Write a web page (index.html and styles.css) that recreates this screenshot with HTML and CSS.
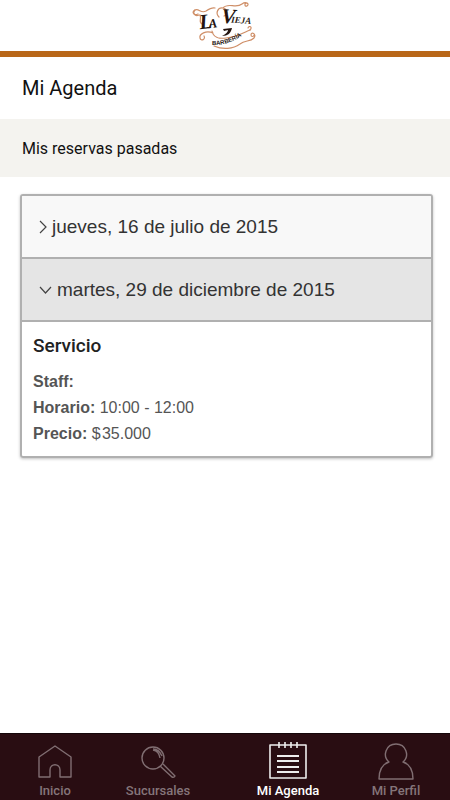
FILE: index.html
```html
<!DOCTYPE html>
<html lang="es">
<head>
<meta charset="utf-8">
<meta name="viewport" content="width=device-width, initial-scale=1">
<title>Mi Agenda</title>
<link rel="stylesheet" href="styles.css">
</head>
<body>
<header class="brand">
  <svg class="logo" width="70" height="50" viewBox="0 0 70 50" role="img" aria-label="La Vieja Barbería">
    <g fill="none" stroke="#cf8f68" stroke-width="1.2" stroke-linecap="round">
      <path d="M8 14C4 16 1 12 5 10C9 8 11 14 16 11C19 9 22 7 25 8"/>
      <path d="M5 10C2 13 5 17 9 15M10 15C12 19 8 22 12 24"/>
      <path d="M29 17C25 13 28 7 33 8C38 9 38 15 34 16M33 8C38 2 46 9 52 4C56 1 60 4 57 6C55 7 54 4 56 3"/>
      <path d="M23 33C16 30 9 34 10 38C11 42 16 39 14 36M22 31C23 37 29 39 36 38C47 37 53 33 60 30"/>
      <path d="M24 46C33 50 43 49 50 44C55 40 60 42 64 38C67 34 61 31 61 35C61 37 64 37 64 35"/>
      <path d="M60 30C63 27 59 25 58 28"/>
    </g>
    <path d="M33 29L42 28C41 33 38 36 32 36C36 34 38 32 38 30L34 31Z" fill="#24140f"/>
    <g fill="#24140f">
      <text class="logo-name" transform="rotate(-7 12 29)"><tspan class="logo-cap" x="10" y="29">L</tspan><tspan class="logo-mid" x="19" y="29">A</tspan></text>
      <text class="logo-name" transform="rotate(4 34 22)"><tspan class="logo-cap" x="31" y="23">V</tspan><tspan x="41" y="22">IEJA</tspan></text>
      <path id="ribbon" d="M22 45Q38 46 55 34" fill="none"/>
      <text class="logo-sub"><textPath href="#ribbon">BARBERÍA</textPath></text>
    </g>
  </svg>
</header>
<main class="content">
  <h1 class="title">Mi Agenda</h1>
  <h2 class="section">Mis reservas pasadas</h2>
  <div class="card">
    <button class="row" type="button" aria-expanded="false">
      <svg width="8" height="14" viewBox="0 0 8 14" aria-hidden="true"><path d="M1 1L7 7L1 13"/></svg>
      <span>jueves, 16 de julio de 2015</span>
    </button>
    <button class="row row-open" type="button" aria-expanded="true" aria-controls="booking">
      <svg width="13" height="8" viewBox="0 0 13 8" aria-hidden="true"><path d="M1 1L6.5 7L12 1"/></svg>
      <span>martes, 29 de diciembre de 2015</span>
    </button>
    <section class="details" id="booking">
      <h3 class="service">Servicio</h3>
      <p><b>Staff:</b></p>
      <p><b>Horario:</b> 10:00 - 12:00</p>
      <p><b>Precio:</b> $&#8202;35.000</p>
    </section>
  </div>
</main>
<nav class="tabs">
  <a class="tab" href="#inicio">
    <svg width="40" height="40" viewBox="0 0 40 40" aria-hidden="true"><path d="M4 14L20 3L36 14V34H25V27C25 20 15 20 15 27V34H4Z"/></svg>
    <span>Inicio</span>
  </a>
  <a class="tab" href="#sucursales">
    <svg width="40" height="40" viewBox="0 0 40 40" aria-hidden="true"><circle cx="15" cy="15" r="11"/><path d="M15 7Q21 8 22 15M22 23L34 34Q36 35 37 33L25 21M15 6Q21 6 24 13"/></svg>
    <span>Sucursales</span>
  </a>
  <a class="tab tab-active" href="#agenda" aria-current="page">
    <svg width="40" height="40" viewBox="0 0 40 40" aria-hidden="true"><path d="M2 2H38V35H2ZM11 -1V5M17 -1V5M23 -1V5M29 -1V5"/><path class="lines" d="M9 13H31M9 18H31M9 24H31M9 29H31"/></svg>
    <span>Mi Agenda</span>
  </a>
  <a class="tab" href="#perfil">
    <svg width="40" height="40" viewBox="0 0 40 40" aria-hidden="true"><path d="M13 19C6 13 10 1 20 1C30 1 34 13 27 19Q37 22 37 36H3Q3 22 13 19Z"/></svg>
    <span>Mi Perfil</span>
  </a>
</nav>
</body>
</html>
```
FILE: styles.css
```css
* { box-sizing: border-box; }

body {
  margin: 0;
  min-height: 100vh;
  display: flex;
  flex-direction: column;
  background: #fff;
  color: #111;
  font-family: Roboto, "Liberation Sans", sans-serif;
}

h1, h2, h3, p { margin: 0; }

.brand {
  display: flex;
  justify-content: center;
  padding-bottom: 1px;
  border-bottom: 6px solid #b96718;
}

.logo { display: block; }

.logo-name { font: italic bold 9px "Liberation Serif", serif; }
.logo-cap { font-size: 21px; }
.logo-mid { font-size: 13px; }
.logo-sub { font: bold 6px "Liberation Sans", sans-serif; }

.content { flex: 1; }

.title {
  padding: 16px 22px;
  font-size: 20px;
  font-weight: 400;
  line-height: 30px;
}

.section {
  padding: 19px 22px 17px;
  background: #f4f3ef;
  font-size: 16px;
  font-weight: 400;
  line-height: 22px;
}

.card {
  margin: 17px 17px 0 20px;
  border: 2px solid #b0b0b0;
  border-radius: 3px;
  box-shadow: 0 1px 3px rgba(0, 0, 0, 0.25);
  overflow: hidden;
}

.row {
  display: flex;
  align-items: center;
  gap: 5px;
  width: 100%;
  height: 63px;
  padding: 0 17px;
  border: 0;
  border-bottom: 2px solid #b0b0b0;
  background: #f8f8f8;
  color: #333;
  font: 19px "Liberation Sans", Arial, sans-serif;
  text-align: left;
}

.row-open { background: #e5e5e5; }

.row svg {
  fill: none;
  stroke: #444;
  stroke-width: 1.2;
}

.details {
  padding: 10px 11px 9px;
  color: #555;
  font: 16px/26px "Liberation Sans", Arial, sans-serif;
}

.service {
  margin-bottom: 9px;
  color: #222;
  font: 500 19px/28px Roboto, sans-serif;
}

.tabs {
  display: grid;
  grid-template-columns: 110fr 96fr 164fr 52fr;
  padding: 9px 28px 1px 0;
  border-top: 1px solid #15070a;
  background: #290d12;
}

.tab {
  display: flex;
  flex-direction: column;
  align-items: center;
  color: #85757a;
  font-size: 13px;
  font-weight: 500;
  line-height: 16px;
  text-decoration: none;
  white-space: nowrap;
}

.tab svg {
  fill: none;
  stroke: #806e72;
  stroke-width: 1.4;
  stroke-linejoin: round;
  overflow: visible;
}

.tab-active { color: #fff; }

.tab-active svg {
  stroke: #eee;
  stroke-width: 1.6;
}

.tab-active .lines { stroke-width: 2; }
```
